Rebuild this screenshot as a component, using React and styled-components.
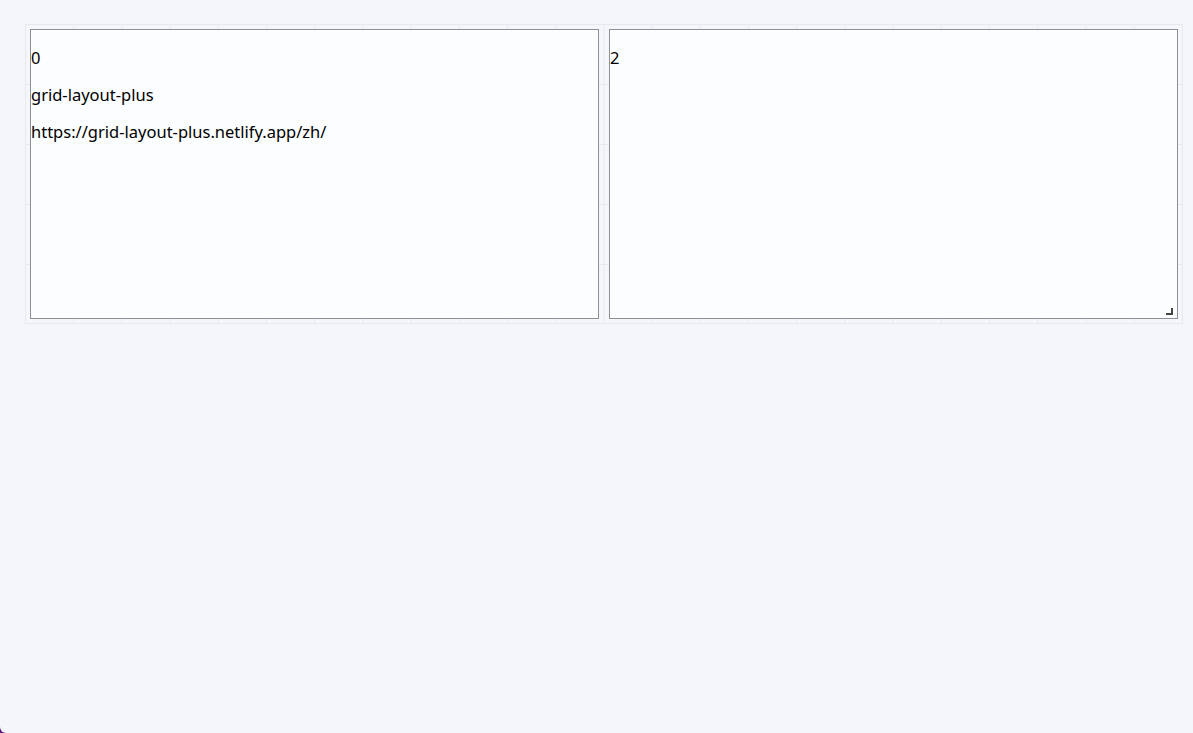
import React from "react";
import styled, { createGlobalStyle } from "styled-components";

const Global = createGlobalStyle`
  html { background: #5b1a7a; }
  body {
    margin: 0;
    min-height: 733px;
    background: #f4f6fa;
    border-bottom-left-radius: 6px;
    font-family: "Noto Sans", "Open Sans", sans-serif;
    color: #000;
  }
`;

const Page = styled.div`
  padding: 19px 5px 0 20px;
`;

const GridLayout = styled.div`
  position: relative;
  width: 1168px;
  box-sizing: border-box;
  padding: 10px;
  display: grid;
  grid-template-columns: repeat(2, 1fr);
  grid-auto-rows: 290px;
  gap: 10px;

  &::before {
    content: "";
    position: absolute;
    inset: 5px;
    box-sizing: border-box;
    border-right: 1px solid #e7e9ee;
    border-bottom: 1px solid #e7e9ee;
    background-image:
      linear-gradient(to right, #e7e9ee 1px, transparent 1px),
      linear-gradient(to bottom, #e7e9ee 1px, transparent 1px);
    background-size: calc(100% / 24) 60px;
    pointer-events: none;
  }
`;

const Card = styled.div`
  position: relative;
  box-sizing: border-box;
  padding-top: 1px;
  background: #fcfdff;
  border: 1px solid #8c9096;
  font-size: 16.5px;
  line-height: 21px;
  overflow: hidden;
`;

const Line = styled.p`
  margin: 16px 0;
`;

const ResizeHandle = styled.span`
  position: absolute;
  right: 4px;
  bottom: 3px;
  width: 7px;
  height: 7px;
  border-right: 2px solid #444;
  border-bottom: 2px solid #444;
  box-sizing: border-box;
`;

export default function App() {
  return (
    <>
      <Global />
      <Page>
        <GridLayout>
          <Card>
            <Line>0</Line>
            <Line>grid-layout-plus</Line>
            <Line>https://grid-layout-plus.netlify.app/zh/</Line>
          </Card>
          <Card>
            <Line>2</Line>
            <ResizeHandle />
          </Card>
        </GridLayout>
      </Page>
    </>
  );
}
